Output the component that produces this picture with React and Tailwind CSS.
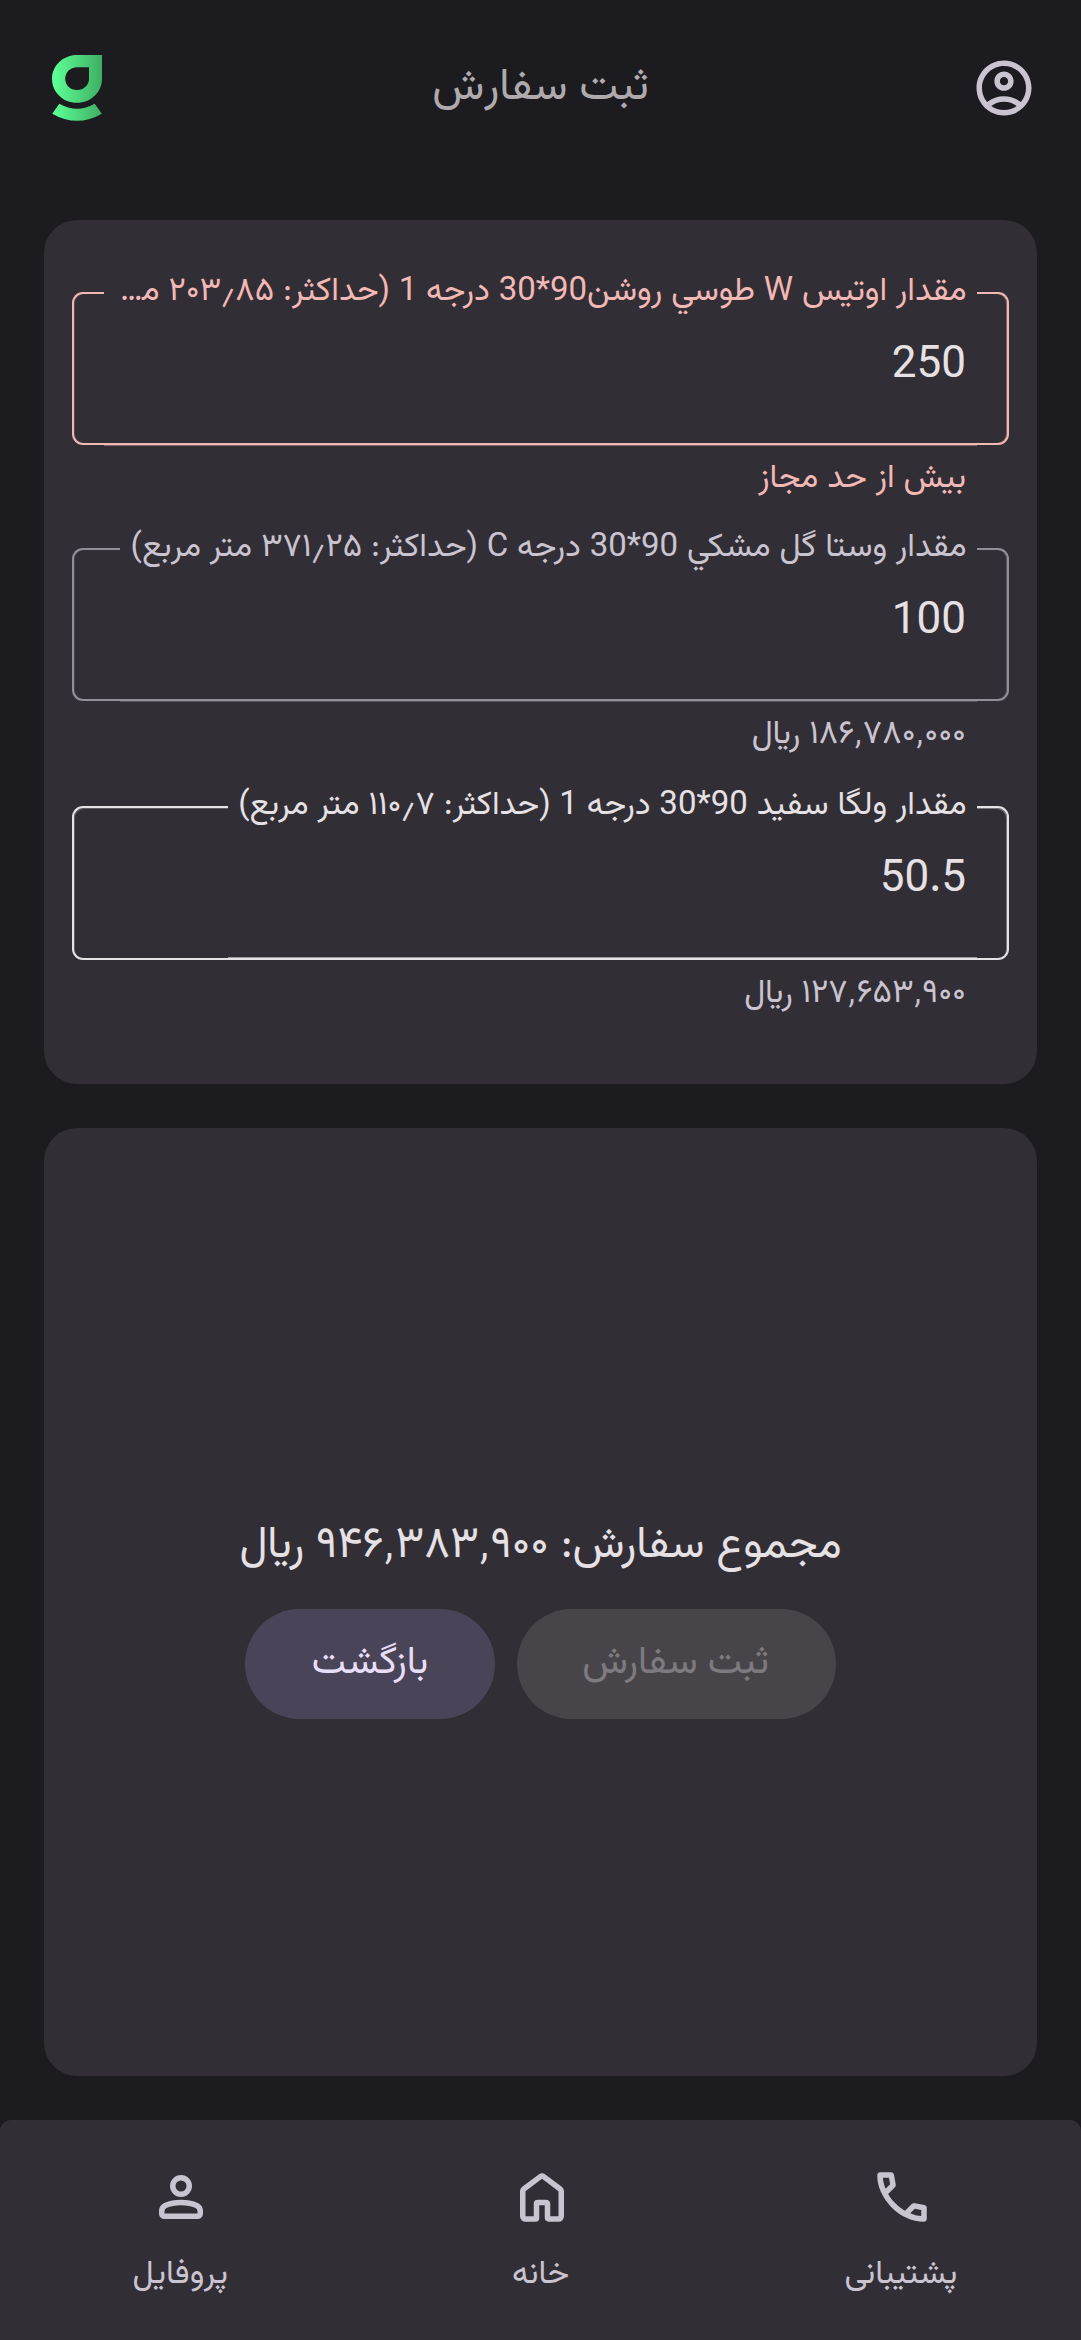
const FIELDS = [
  {
    label: "مقدار اوتيس W طوسي روشن90*30 درجه 1 (حداکثر: ۲۰۳٫۸۵ متر مربع)",
    labelFit: "truncate",
    value: "250",
    helper: "بیش از حد مجاز",
    box: "h-[153px]",
    outline: "border-[#f2b8b5]",
    glow: "shadow-[0_1px_0_0_#f2b8b566]",
    glowStart: "shadow-[inset_-1px_0_0_0_#f2b8b566]",
    glowEnd: "shadow-[inset_1px_0_0_0_#f2b8b533]",
    labelColor: "text-[#f2b8b5]",
    helperColor: "text-[#f2b8b5]",
  },
  {
    label: "مقدار وستا گل مشکي 90*30 درجه C (حداکثر: ۳۷۱٫۲۵ متر مربع)",
    labelFit: "whitespace-nowrap",
    value: "100",
    helper: "۱۸۶٬۷۸۰٬۰۰۰ ﷼",
    box: "h-[153px]",
    outline: "border-[#938f99]",
    glow: "shadow-[0_1px_0_0_#938f9966]",
    glowStart: "shadow-[inset_-1px_0_0_0_#938f9966]",
    glowEnd: "shadow-[inset_1px_0_0_0_#938f9933]",
    labelColor: "text-[#cac4d0]",
    helperColor: "text-[#cac4d0]",
  },
  {
    label: "مقدار ولگا سفید 90*30 درجه 1 (حداکثر: ۱۱۰٫۷ متر مربع)",
    labelFit: "whitespace-nowrap",
    value: "50.5",
    helper: "۱۲۷٬۶۵۳٬۹۰۰ ﷼",
    box: "mt-0.5 h-[154px]",
    outline: "border-[#e6e1e5]",
    glow: "shadow-[inset_0_-1px_0_0_#e6e1e599]",
    glowStart: "shadow-[inset_-1px_1px_0_0_#e6e1e566]",
    glowEnd: "shadow-[inset_1px_1px_0_0_#e6e1e544]",
    labelColor: "text-[#e6e1e5]",
    helperColor: "text-[#cac4d0]",
  },
];

function Logo() {
  return (
    <svg className="h-[66px] w-[50px]" viewBox="52 55 50 66">
      <defs>
        <linearGradient id="leaf" x1="54" y1="0" x2="101" y2="0" gradientUnits="userSpaceOnUse">
          <stop offset="0" stopColor="#5cff95" />
          <stop offset="1" stopColor="#3fb064" />
        </linearGradient>
      </defs>
      <path
        fill="url(#leaf)"
        fillRule="evenodd"
        d="M77 55H102V78.9C102 92 91 102.7 77 102.7S52 92 52 78.9 63 55 77 55ZM77 67.3C70.4 67.3 65.2 72.4 65.2 78.8S70.4 90.1 77 90.1 89 85.2 89 78.8V67.3Z"
      />
      <path fill="url(#leaf)" d="M59.3 103.7Q77 113.6 94.7 103.7L101.8 113.7Q77 128 52.3 113.7Z" />
    </svg>
  );
}

function AccountIcon() {
  return (
    <svg className="size-[66px]" viewBox="0 0 24 24" fill="#cac4d0">
      <path d="M12 2C6.48 2 2 6.48 2 12s4.48 10 10 10 10-4.48 10-10S17.52 2 12 2zM7.35 18.5C8.66 17.56 10.26 17 12 17s3.34.56 4.65 1.5c-1.31.94-2.91 1.5-4.65 1.5s-3.34-.56-4.65-1.5zm10.79-1.38a9.947 9.947 0 0 0-12.28 0A7.957 7.957 0 0 1 4 12c0-4.42 3.58-8 8-8s8 3.58 8 8c0 1.95-.7 3.73-1.86 5.12z" />
      <path d="M12 6c-1.93 0-3.5 1.57-3.5 3.5S10.07 13 12 13s3.5-1.57 3.5-3.5S13.93 6 12 6zm0 5c-.83 0-1.5-.67-1.5-1.5S11.17 8 12 8s1.5.67 1.5 1.5S12.83 11 12 11z" />
    </svg>
  );
}

function PhoneIcon() {
  return (
    <svg className="size-[66px] translate-x-px" viewBox="0 0 24 24" fill="#cac4d0">
      <path d="M19.95 21q-3.125 0-6.175-1.362t-5.55-3.863t-3.862-5.55T3 4.05q0-.45.3-.75t.75-.3H8.1q.35 0 .625.238t.325.562l.65 3.5q.05.4-.025.675T9.4 8.45L6.975 10.9q.5.925 1.187 1.787t1.513 1.663q.775.775 1.625 1.438T13.1 17l2.35-2.35q.225-.225.588-.337t.712-.063l3.45.7q.35.1.575.363T21 15.9v4.05q0 .45-.3.75t-.75.3M6.025 9l1.65-1.65L7.25 5H5.025q.125 1.025.35 2.025T6.025 9m8.95 8.95q.975.425 1.988.675T19 18.95v-2.2l-2.35-.475z" />
    </svg>
  );
}

function HomeIcon() {
  return (
    <svg className="size-[66px] translate-x-px" viewBox="0 0 24 24" fill="none" stroke="#cac4d0" strokeWidth="2" strokeLinejoin="round">
      <path d="M5 9.9c0-.32.15-.62.4-.8l6-4.5a1 1 0 0 1 1.2 0l6 4.5c.25.18.4.48.4.8V19a1 1 0 0 1-1 1h-3.6a.4.4 0 0 1-.4-.4V14.4a.4.4 0 0 0-.4-.4h-3.2a.4.4 0 0 0-.4.4v5.2a.4.4 0 0 1-.4.4H6a1 1 0 0 1-1-1z" />
    </svg>
  );
}

function PersonIcon() {
  return (
    <svg className="size-[66px] translate-x-px" viewBox="0 0 24 24" fill="none" stroke="#cac4d0" strokeWidth="2">
      <circle cx="12" cy="8" r="3" />
      <path d="M5 17.2c0-.9.5-1.7 1.3-2.1C8 14.35 10 14 12 14s4 .35 5.7 1.1c.8.4 1.3 1.2 1.3 2.1V18a1 1 0 0 1-1 1H6a1 1 0 0 1-1-1z" />
    </svg>
  );
}

function Field({ field }) {
  return (
    <div>
      <div className={`relative ${field.box}`}>
        <div className="absolute inset-0 flex">
          <div className={`w-8 shrink-0 rounded-r-[11px] border-2 border-l-0 ${field.outline} ${field.glowStart}`} />
          <div className={`min-w-0 border-b-2 px-[10.5px] ${field.outline} ${field.glow}`}>
            <div className={`-mt-[22px] text-[33px] leading-[44px] ${field.labelFit} ${field.labelColor}`}>{field.label}</div>
          </div>
          <div className={`min-w-8 grow rounded-l-[11px] border-2 border-r-0 ${field.outline} ${field.glowEnd}`} />
        </div>
        <div className="pt-[42px] pr-[43px] text-[44px] leading-[66px] text-[#e6e1e5]">{field.value}</div>
      </div>
      <div className={`pt-3 pr-[43px] text-[33px] leading-[44px] ${field.helperColor}`}>{field.helper}</div>
    </div>
  );
}

const NAV = [
  { label: "پشتیبانی", Icon: PhoneIcon },
  { label: "خانه", Icon: HomeIcon },
  { label: "پروفایل", Icon: PersonIcon },
];

export default function App() {
  return (
    <div dir="rtl" className="flex h-[2340px] flex-col bg-[#1c1b1f] font-['Vazirmatn','Roboto','DejaVu_Sans',sans-serif]">
      <header className="flex h-44 items-center justify-between px-11">
        <AccountIcon />
        <h1 className="pt-0.5 text-[44px] leading-[176px] text-[#aeaaae] [font-kerning:none]">ثبت سفارش</h1>
        <div className="flex w-[66px] justify-center">
          <Logo />
        </div>
      </header>

      <main className="flex grow flex-col gap-11 p-11">
        <section className="flex h-[863.5px] flex-col gap-[47px] rounded-[33px] bg-[#322e35] px-7 pt-[72px]">
          {FIELDS.map((field) => (
            <Field key={field.value} field={field} />
          ))}
        </section>

        <section className="flex grow flex-col items-center rounded-[33px] bg-[#322e35] pt-[386.5px]">
          <p className="text-[44px] leading-[66px] text-[#e6e1e5]">مجموع سفارش: ۹۴۶٬۳۸۳٬۹۰۰ ﷼</p>
          <div className="mt-[29px] flex gap-[22px] text-[38.5px] leading-[110px]">
            <button className="h-[110px] w-[319px] rounded-full bg-[#48454a] pr-0.5 text-[#7e7b80]">ثبت سفارش</button>
            <button className="h-[110px] w-[250px] rounded-full bg-[#4a4458] text-[#e8def8]">بازگشت</button>
          </div>
        </section>
      </main>

      <nav className="grid h-[220px] grid-cols-3 rounded-t-[11px] bg-[#322e35]">
        {NAV.map(({ label, Icon }) => (
          <a key={label} className="flex flex-col items-center gap-[23px] pt-11">
            <Icon />
            <span className="text-[33px] leading-[44px] text-[#cac4d0]">{label}</span>
          </a>
        ))}
      </nav>
    </div>
  );
}
